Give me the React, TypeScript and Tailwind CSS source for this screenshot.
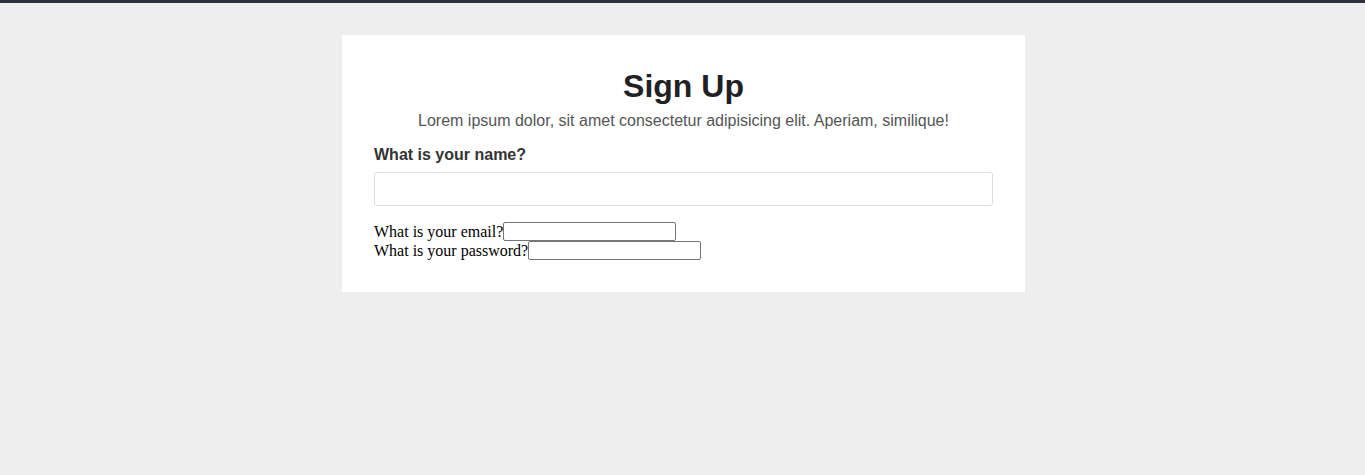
export default function App() {
  return (
    <div className="min-h-[475px] bg-[#eeeeee] font-['Liberation_Sans',Arial,sans-serif]">
      <div className="h-[3px] bg-[#2d3142]" />
      <div className="flex justify-center pt-[32px] pl-[2px]">
        <form className="w-[683px] bg-white px-[32px] pt-[32px] pb-[32px]">
          <h1 className="text-center text-[32px] font-bold leading-[38px] text-[#1f2125]">Sign Up</h1>
          <p className="mt-[6px] text-center text-[16px] leading-[19px] text-[#555555]">
            Lorem ipsum dolor, sit amet consectetur adipisicing elit. Aperiam, similique!
          </p>
          <label className="mt-[15px] block text-[16px] font-bold leading-[19px] text-[#333333]">
            What is your name?
          </label>
          <input
            type="text"
            className="mt-[8px] block h-[34px] w-full rounded-[3px] border border-[#dddddd] bg-white px-2 outline-none"
          />
          <div className="mt-[16px] font-['Liberation_Serif','Times_New_Roman',serif] text-[16px] leading-[19px] text-black">
            <div className="flex h-[19px] items-end">
              <span>What is your email?</span>
              <input
                type="email"
                className="h-[19px] w-[173px] rounded-[2px] border border-[#767676] bg-white px-[2px] text-[13px] outline-none"
              />
            </div>
            <div className="flex h-[19px] items-end">
              <span>What is your password?</span>
              <input
                type="password"
                className="h-[19px] w-[173px] rounded-[2px] border border-[#767676] bg-white px-[2px] text-[13px] outline-none"
              />
            </div>
          </div>
        </form>
      </div>
    </div>
  );
}
